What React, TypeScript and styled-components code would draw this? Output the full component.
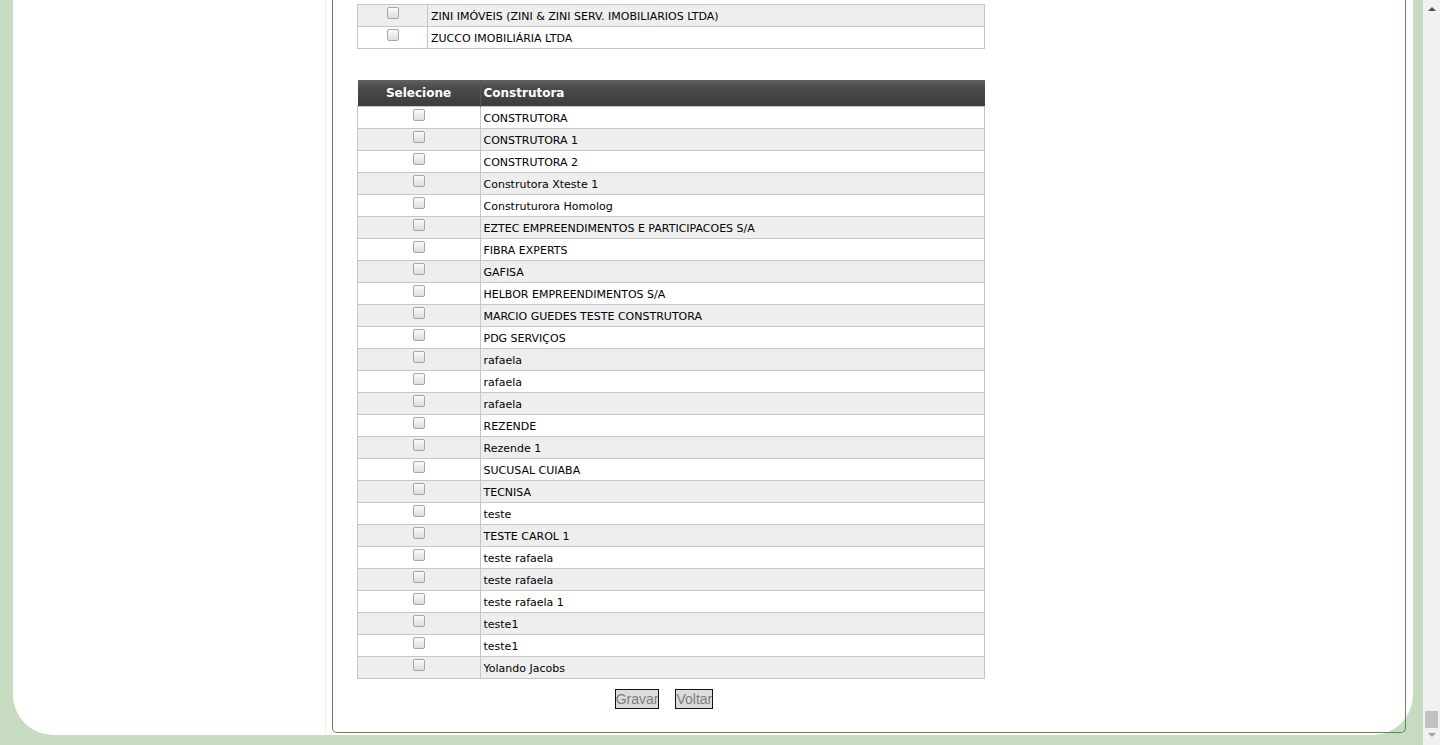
import React from "react";
import styled, { createGlobalStyle } from "styled-components";

const GlobalStyle = createGlobalStyle`
  html, body {
    margin: 0;
    padding: 0;
    height: 100%;
    overflow: hidden;
  }
  body {
    font-family: "DejaVu Sans", Verdana, sans-serif;
    background: #c6dbbf;
  }
`;

const Screen = styled.div`
  display: flex;
  width: 1440px;
  height: 745px;
`;

const Viewport = styled.div`
  flex: 1;
  display: flex;
  flex-direction: column;
  overflow: hidden;
  background: #c6dbbf;
  padding: 0 10px 10px 13px;
`;

const Card = styled.div`
  flex: 1;
  display: flex;
  background: #ffffff;
  border-radius: 0 0 40px 40px;
  padding: 0 7px 2px 0;
`;

const Sidebar = styled.aside`
  width: 312px;
  flex-shrink: 0;
  border-right: 1px solid #efefef;
  margin-right: 6px;
`;

const Panel = styled.main`
  flex: 1;
  border: 1px solid #5d8b50;
  border-top: none;
  border-radius: 0 0 5px 5px;
  padding: 0 0 23px 24px;
  display: flex;
  flex-direction: column;
  justify-content: flex-end;
`;

const Grid = styled.table`
  width: 628px;
  border-collapse: collapse;
  font-family: "DejaVu Sans", Verdana, sans-serif;
  font-size: 11px;
  color: #000;
`;

const HeadCell = styled.th<{ $align?: string }>`
  height: 26px;
  padding: 0 3px;
  text-align: ${(p) => p.$align || "left"};
  font-family: "DejaVu Sans", Verdana, sans-serif;
  font-weight: bold;
  font-size: 12px;
  color: #ffffff;
  background: linear-gradient(#626262 0%, #4a4a4a 30%, #3c3c3c 100%);
  border: none;
  border-right: 1px solid #585858;
  &:last-child {
    border-right: none;
  }
`;

const Row = styled.tr<{ $alt?: boolean }>`
  background: ${(p) => (p.$alt ? "#eeeeee" : "#ffffff")};
`;

const CheckCell = styled.td<{ $w: number }>`
  width: ${(p) => p.$w}px;
  height: 22px;
  padding: 2px 0 0;
  box-sizing: border-box;
  border: 1px solid #c6c6c6;
  text-align: center;
  vertical-align: top;
  line-height: 0;
`;

const TextCell = styled.td`
  height: 22px;
  padding: 1px 3px 0;
  box-sizing: border-box;
  border: 1px solid #c6c6c6;
  vertical-align: middle;
  white-space: nowrap;
`;

const Check = styled.input.attrs({ type: "checkbox" })`
  appearance: none;
  -webkit-appearance: none;
  width: 12px;
  height: 12px;
  margin: 0;
  border: 1px solid #a6a6a6;
  border-radius: 2px;
  background: linear-gradient(#fbfbfb, #dedede);
  box-sizing: border-box;
`;

const Spacer = styled.div`
  height: 31px;
  flex-shrink: 0;
`;

const ButtonRow = styled.div`
  width: 628px;
  display: flex;
  justify-content: center;
  gap: 16px;
  margin-top: 10px;
  padding-right: 14px;
  box-sizing: border-box;
`;

const FormButton = styled.button`
  font-family: "Liberation Sans", Arial, sans-serif;
  font-size: 14px;
  line-height: 18px;
  color: #7d7d7d;
  background: #dcdcdc;
  border: 1px solid #111;
  padding: 0;
  margin: 0;
  border-radius: 0;
`;

const ScrollTrack = styled.div`
  width: 17px;
  flex-shrink: 0;
  background: #f1f1f1;
  display: flex;
  flex-direction: column;
  align-items: center;
  justify-content: space-between;
  padding: 7px 0 8px;
  box-sizing: border-box;
`;

const Arrow = styled.div<{ $down?: boolean }>`
  width: 0;
  height: 0;
  border-left: 4px solid transparent;
  border-right: 4px solid transparent;
  ${(p) =>
    p.$down
      ? "border-top: 4px solid #a3a3a3;"
      : "border-bottom: 4px solid #505050;"}
`;

const ThumbGroup = styled.div`
  display: flex;
  flex-direction: column;
  align-items: center;
  gap: 5px;
`;

const Thumb = styled.div`
  width: 13px;
  height: 17px;
  background: #c1c1c1;
`;

const imobiliarias = [
  "ZINI IMÓVEIS (ZINI & ZINI SERV. IMOBILIARIOS LTDA)",
  "ZUCCO IMOBILIÁRIA LTDA",
];

const construtoras = [
  "CONSTRUTORA",
  "CONSTRUTORA 1",
  "CONSTRUTORA 2",
  "Construtora Xteste 1",
  "Construturora Homolog",
  "EZTEC EMPREENDIMENTOS E PARTICIPACOES S/A",
  "FIBRA EXPERTS",
  "GAFISA",
  "HELBOR EMPREENDIMENTOS S/A",
  "MARCIO GUEDES TESTE CONSTRUTORA",
  "PDG SERVIÇOS",
  "rafaela",
  "rafaela",
  "rafaela",
  "REZENDE",
  "Rezende 1",
  "SUCUSAL CUIABA",
  "TECNISA",
  "teste",
  "TESTE CAROL 1",
  "teste rafaela",
  "teste rafaela",
  "teste rafaela 1",
  "teste1",
  "teste1",
  "Yolando Jacobs",
];

export default function App() {
  const lastImob = imobiliarias.length - 1;
  return (
    <>
      <GlobalStyle />
      <Screen>
        <Viewport>
          <Card>
            <Sidebar />
            <Panel>
              <Grid>
                <tbody>
                  {imobiliarias.map((name, i) => (
                    <Row key={i} $alt={(lastImob - i) % 2 === 1}>
                      <CheckCell $w={70}>
                        <Check />
                      </CheckCell>
                      <TextCell>{name}</TextCell>
                    </Row>
                  ))}
                </tbody>
              </Grid>
              <Spacer />
              <Grid>
                <thead>
                  <tr>
                    <HeadCell $align="center" style={{ width: 116 }}>
                      Selecione
                    </HeadCell>
                    <HeadCell>Construtora</HeadCell>
                  </tr>
                </thead>
                <tbody>
                  {construtoras.map((name, i) => (
                    <Row key={i} $alt={i % 2 === 1}>
                      <CheckCell $w={122}>
                        <Check />
                      </CheckCell>
                      <TextCell>{name}</TextCell>
                    </Row>
                  ))}
                </tbody>
              </Grid>
              <ButtonRow>
                <FormButton type="button">Gravar</FormButton>
                <FormButton type="button">Voltar</FormButton>
              </ButtonRow>
            </Panel>
          </Card>
        </Viewport>
        <ScrollTrack>
          <Arrow />
          <ThumbGroup>
            <Thumb />
            <Arrow $down />
          </ThumbGroup>
        </ScrollTrack>
      </Screen>
    </>
  );
}
